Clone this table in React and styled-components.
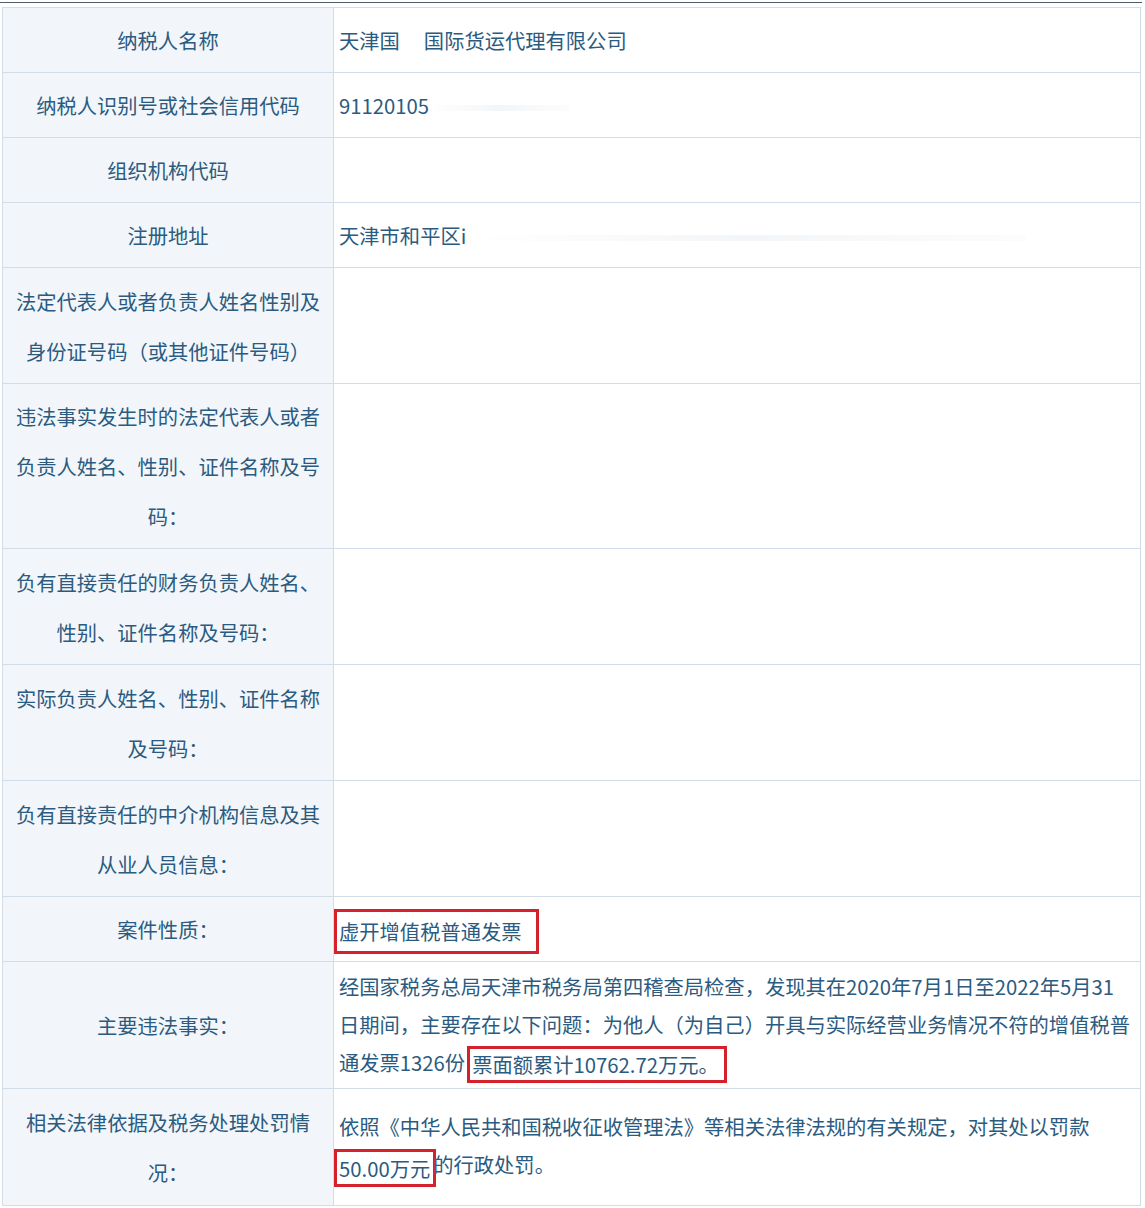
import React from "react";
import styled, { createGlobalStyle } from "styled-components";

const Global = createGlobalStyle`
  html, body { margin: 0; padding: 0; background: #ffffff; }
  body { font-family: "Noto Sans CJK SC", "Microsoft YaHei", sans-serif; }
`;

const Page = styled.div`
  padding-top: 2px;
  width: 1145px;
`;

const TopRule = styled.div`
  width: 1142px;
  height: 1px;
  background: #4f5e6b;
`;

const Table = styled.table`
  margin: 4px 0 0 2px;
  width: 1139px;
  border-collapse: collapse;
  table-layout: fixed;
  border: 1px solid #d3dde7;
`;

const LabelCol = styled.col`
  width: 331px;
`;

const Row = styled.tr`
  height: ${(p) => p.$h}px;
`;

const Label = styled.td`
  background: #f2f6fa;
  border: 1px solid #d3dde7;
  padding: 0 10px;
  text-align: center;
  vertical-align: middle;
  font-size: 20.3px;
  line-height: 50px;
  color: #2b5b80;
`;

const Value = styled.td`
  background: #ffffff;
  border: 1px solid #d3dde7;
  padding: 0 4px 0 5px;
  vertical-align: middle;
  font-size: 20.3px;
  line-height: ${(p) => (p.$dense ? "38px" : "50px")};
  color: #2b5b80;
`;

const Mark = styled.span`
  display: inline-block;
  vertical-align: middle;
  border: 3px solid #d4212c;
  line-height: ${(p) => p.$h}px;
  padding: 0 ${(p) => p.$pr || 3}px 0 2px;
  margin-left: ${(p) => (p.$lead ? "-5px" : "2px")};
  margin-right: ${(p) => (p.$lead ? "-3px" : "0")};
`;

const Redacted = styled.span`
  display: inline-block;
  width: ${(p) => p.$w}px;
`;

const Smudge = styled.span`
  display: inline-block;
  width: ${(p) => p.$w}px;
  height: 6px;
  vertical-align: middle;
  background: linear-gradient(90deg, rgba(220,228,235,0.0), rgba(220,228,235,0.35), rgba(230,236,240,0.15));
`;

const rows = [
  { h: 65, label: "纳税人名称", value: <>天津国<Redacted $w={24} />国际货运代理有限公司</> },
  { h: 65, label: "纳税人识别号或社会信用代码", value: <>91120105<Smudge $w={140} /></> },
  { h: 65, label: "组织机构代码", value: null },
  { h: 65, label: "注册地址", value: <>天津市和平区i<Smudge $w={560} /></> },
  { h: 116, label: <>法定代表人或者负责人姓名性别及<br />身份证号码（或其他证件号码）</>, value: null },
  { h: 165, label: <>违法事实发生时的法定代表人或者<br />负责人姓名、性别、证件名称及号<br />码：</>, value: null },
  { h: 116, label: <>负有直接责任的财务负责人姓名、<br />性别、证件名称及号码：</>, value: null },
  { h: 116, label: <>实际负责人姓名、性别、证件名称<br />及号码：</>, value: null },
  { h: 116, label: <>负有直接责任的中介机构信息及其<br />从业人员信息：</>, value: null },
  { h: 65, label: "案件性质：", value: <Mark $lead $pr={14} $h={39}>虚开增值税普通发票</Mark> },
  {
    h: 127,
    label: "主要违法事实：",
    dense: true,
    value: (
      <>
        经国家税务总局天津市税务局第四稽查局检查，发现其在2020年7月1日至2022年5月31
        <br />
        日期间，主要存在以下问题：为他人（为自己）开具与实际经营业务情况不符的增值税普
        <br />
        通发票1326份<Mark $h={31} $pr={5}>票面额累计10762.72万元。</Mark>
      </>
    ),
  },
  {
    h: 117,
    label: <>相关法律依据及税务处理处罚情<br />况：</>,
    dense: true,
    value: (
      <>
        依照《中华人民共和国税收征收管理法》等相关法律法规的有关规定，对其处以罚款
        <br />
        <Mark $lead $h={32}>50.00万元</Mark>的行政处罚。
      </>
    ),
  },
];

export default function App() {
  return (
    <Page>
      <Global />
      <TopRule />
      <Table>
        <colgroup>
          <LabelCol />
          <col />
        </colgroup>
        <tbody>
          {rows.map((r, i) => (
            <Row key={i} $h={r.h}>
              <Label>{r.label}</Label>
              <Value $dense={r.dense}>{r.value}</Value>
            </Row>
          ))}
        </tbody>
      </Table>
    </Page>
  );
}
